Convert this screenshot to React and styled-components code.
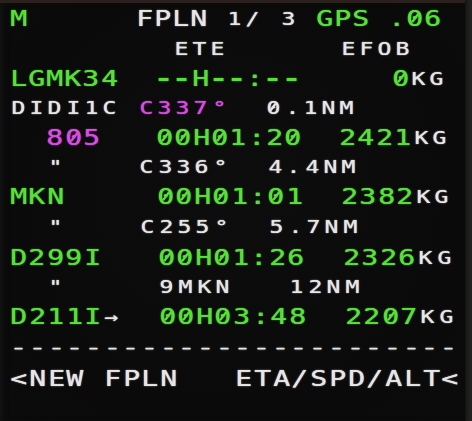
import React from 'react';
import styled, { createGlobalStyle, css } from 'styled-components';

const Global = createGlobalStyle`
  html, body { margin: 0; padding: 0; background: #0a0a0a; }
  #root { width: 472px; height: 421px; }
`;

const GREEN = '#58e03a';
const WHITE = '#e6e6e6';
const MAGENTA = '#d84ce2';

const Frame = styled.div`
  width: 472px;
  height: 421px;
  display: flex;
  overflow: hidden;
  background: #0a0a0a;
`;

const Screen = styled.div`
  flex: 1;
  display: flex;
  flex-direction: column;
  border-top: 3px solid #2a211e;
  background: radial-gradient(ellipse at 50% 45%, #0d0d0d 0%, #0a0a0a 70%, #0c0b0b 100%);
  box-shadow: inset 5px 0 6px -3px #151515;
  font-family: "DejaVu Sans Mono", "Liberation Mono", monospace;
`;

const Bezel = styled.div`
  width: 7px;
  background: linear-gradient(90deg, #141313 0%, #1f1e1e 45%, #262120 100%);
`;

const Line = styled.div`
  height: ${(p) => p.$h}px;
  display: grid;
  grid-template-columns: repeat(24, ${(p) => p.$p}px);
  align-items: center;
  padding-left: 9.25px;
`;

const Seg = styled.div`
  grid-column: ${(p) => p.$c + 1} / span ${(p) => p.$n};
  display: grid;
  grid-template-columns: repeat(${(p) => p.$n}, ${(p) => p.$p}px);
  color: ${(p) => p.$color};
  font-size: ${(p) => (p.$big ? 22 : 18)}px;
  line-height: 1;
  transform: translateX(${(p) => p.$dx || 0}px);
  text-shadow: 0 0 0.7px ${(p) => p.$color}, 0 0 2px ${(p) => p.$color}55;
`;

const Cell = styled.span`
  display: block;
  text-align: center;
  white-space: pre;
`;

const Glyph = styled.span`
  position: relative;
  display: inline-block;
  transform: scaleX(${(p) => p.$scale});
  font-weight: ${(p) => (p.$bold ? 700 : 400)};
  ${(p) =>
    p.$zero &&
    css`
      &::after {
        content: '';
        position: absolute;
        left: 50%;
        top: 47%;
        width: 1.8px;
        height: 0.46em;
        background: currentColor;
        transform: translate(-50%, -50%) rotate(30deg);
      }
    `}
`;

const L = true;
const S = false;

const rows = [
  { h: 31, p: 18.0, segs: [[0, 'M', GREEN, L], [7, 'FPLN', WHITE, L], [12, '1/', WHITE, S], [15, '3', WHITE, S], [17, 'GPS', GREEN, L], [21, '.06', GREEN, L]] },
  { h: 30, p: 18.1, segs: [[9, 'ETE', WHITE, S], [18, 'EFOB', WHITE, S, 4]] },
  { h: 29, p: 18.2, segs: [[0, 'LGMK34', GREEN, L], [8, '--H--:--', GREEN, L], [21, '0', GREEN, L], [22, 'KG', WHITE, S]] },
  { h: 29.5, p: 18.25, segs: [[0, 'DIDI1C', WHITE, S], [7, 'C337°', MAGENTA, S], [14, '0.1NM', WHITE, S]] },
  { h: 30, p: 18.3, segs: [[2, '805', MAGENTA, L], [8, '00H01:20', GREEN, L], [18, '2421', GREEN, L], [22, 'KG', WHITE, S]] },
  { h: 29, p: 18.35, segs: [[2, '"', WHITE, S], [7, 'C336°', WHITE, S], [14, '4.4NM', WHITE, S]] },
  { h: 30, p: 18.4, segs: [[0, 'MKN', GREEN, L], [8, '00H01:01', GREEN, L], [18, '2382', GREEN, L], [22, 'KG', WHITE, S]] },
  { h: 31, p: 18.45, segs: [[2, '"', WHITE, S], [7, 'C255°', WHITE, S], [14, '5.7NM', WHITE, S]] },
  { h: 30, p: 18.5, segs: [[0, 'D299I', GREEN, L], [8, '00H01:26', GREEN, L], [18, '2326', GREEN, L], [22, 'KG', WHITE, S]] },
  { h: 29.5, p: 18.55, segs: [[2, '"', WHITE, S], [8, '9MKN', WHITE, S], [15, '12NM', WHITE, S]] },
  { h: 29, p: 18.6, segs: [[0, 'D211I', GREEN, L], [5, '→', WHITE, S], [8, '00H03:48', GREEN, L], [18, '2207', GREEN, L], [22, 'KG', WHITE, S]] },
  { h: 31.5, p: 18.7, segs: [[0, '------------------------', WHITE, S]] },
  { h: 33, p: 18.75, segs: [[0, '<NEW FPLN', WHITE, L], [12, 'ETA/SPD/ALT<', WHITE, L]] },
];

function Text({ col, text, color, big, dx, pitch }) {
  const chars = Array.from(text);
  return (
    <Seg $c={col} $n={chars.length} $p={pitch} $color={color} $big={big} $dx={dx}>
      {chars.map((ch, i) => {
        const dash = ch === '-';
        const scale = dash ? (big ? 1.37 : 1.7) : 1.28;
        return (
          <Cell key={i}>
            <Glyph $scale={scale} $bold={dash && big} $zero={ch === '0'}>
              {ch}
            </Glyph>
          </Cell>
        );
      })}
    </Seg>
  );
}

export default function App() {
  return (
    <>
      <Global />
      <Frame>
        <Screen>
          {rows.map((r, i) => (
            <Line key={i} $h={r.h} $p={r.p}>
              {r.segs.map(([col, text, color, big, dx], j) => (
                <Text key={j} col={col} text={text} color={color} big={big} dx={dx} pitch={r.p} />
              ))}
            </Line>
          ))}
        </Screen>
        <Bezel />
      </Frame>
    </>
  );
}
